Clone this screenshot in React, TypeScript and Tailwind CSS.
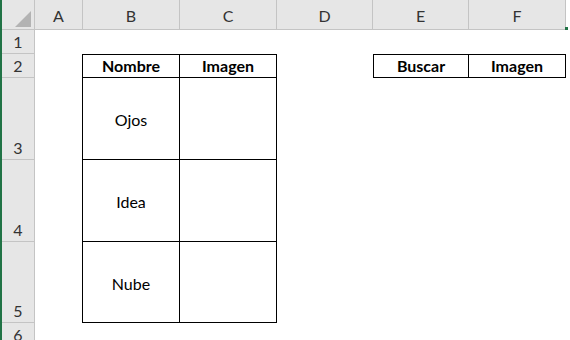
const cols = ["A", "B", "C", "D", "E", "F"];
const colW = ["w-[48px]", "w-[97px]", "w-[97px]", "w-[96px]", "w-[96px]", "w-[97px]"];

const rows = [
  { n: "1", h: "h-[24px]" },
  { n: "2", h: "h-[24px]" },
  { n: "3", h: "h-[82px]" },
  { n: "4", h: "h-[82px]" },
  { n: "5", h: "h-[81px]" },
  { n: "6", h: "h-[24px]" },
];

type Cell = { text?: string; bold?: boolean; cls?: string };

// which cells carry borders / text, keyed "row-col"
const cells: Record<string, Cell> = {
  "2-A": { cls: "border-r border-r-black" },
  "3-A": { cls: "border-r border-r-black" },
  "4-A": { cls: "border-r border-r-black" },
  "5-A": { cls: "border-r border-r-black" },
  "2-B": { text: "Nombre", bold: true, cls: "border-t border-r border-b border-black" },
  "2-C": { text: "Imagen", bold: true, cls: "border-t border-r border-b border-black" },
  "3-B": { text: "Ojos", cls: "border-r border-b border-black pt-[3px]" },
  "3-C": { cls: "border-r border-b border-black" },
  "4-B": { text: "Idea", cls: "border-r border-b border-black pt-[3px]" },
  "4-C": { cls: "border-r border-b border-black" },
  "5-B": { text: "Nube", cls: "border-r border-b border-black pt-[3px]" },
  "5-C": { cls: "border-r border-b border-black" },
  "2-E": { text: "Buscar", bold: true, cls: "border border-black" },
  "2-F": { text: "Imagen", bold: true, cls: "border-t border-r border-b border-black" },
};

export default function App() {
  return (
    <div className="relative h-[340px] w-[570px] overflow-hidden bg-white font-['Lato','Liberation_Sans',sans-serif] text-[16px] text-black">
      <div className="absolute left-0 top-0 h-full w-[2px] bg-[#217346]" />
      <div className="absolute left-[565px] top-[27px] h-[3px] w-[3px] bg-[#217346]" />

      {/* column headers */}
      <div className="flex h-[30px]">
        <div className="flex h-full w-[35px] items-center justify-end border-r border-b border-[#c4c4c4] bg-[#e6e6e6] pr-[2px]">
          <svg width="17" height="17" viewBox="0 0 17 17" className="mt-[10px]">
            <polygon points="16,0 16,16 0,16" fill="#b3b3b3" />
          </svg>
        </div>
        {cols.map((c, i) => (
          <div
            key={c}
            className={`${colW[i]} flex h-full items-center justify-center border-r border-b border-[#c4c4c4] bg-[#e6e6e6] pt-[2px] text-[#333]`}
          >
            {c}
          </div>
        ))}
        <div className="h-full flex-1 bg-white" />
      </div>

      {rows.map((r) => (
        <div key={r.n} className={`flex ${r.h}`}>
          <div className="flex h-full w-[35px] items-end justify-center border-r border-b border-[#c4c4c4] bg-[#e6e6e6] pl-[2px] leading-[22px] text-[#333]">
            {r.n}
          </div>
          {cols.map((c, i) => {
            const cell = cells[`${r.n}-${c}`];
            return (
              <div
                key={c}
                className={`${colW[i]} flex h-full items-center justify-center ${cell?.cls ?? ""} ${
                  cell?.bold ? "font-bold" : ""
                }`}
              >
                {cell?.text}
              </div>
            );
          })}
        </div>
      ))}
    </div>
  );
}
